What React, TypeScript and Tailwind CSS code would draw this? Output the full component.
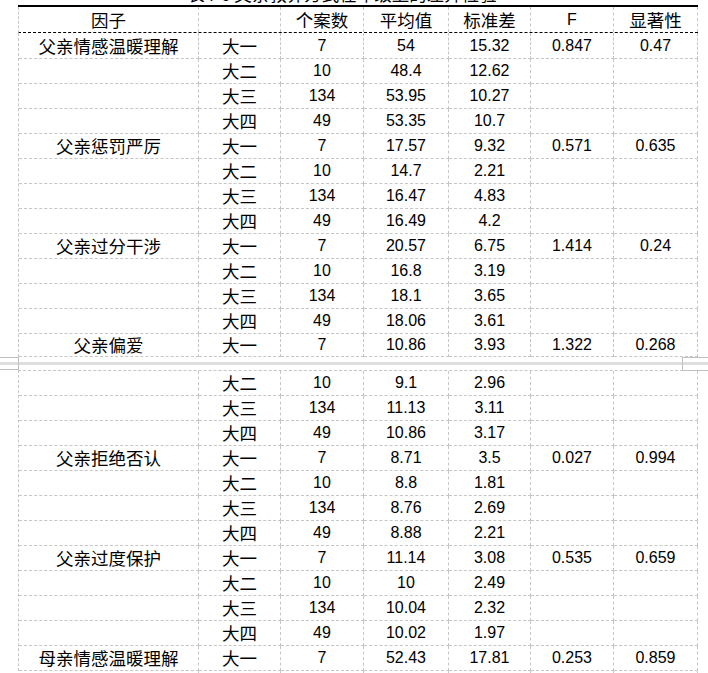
import React from "react";

type Row = { f?: string; g: string; n: string; m: string; sd: string; F?: string; p?: string; h?: number };

const page1: Row[] = [
  { f: "父亲情感温暖理解", g: "大一", n: "7", m: "54", sd: "15.32", F: "0.847", p: "0.47", h: 26 },
  { g: "大二", n: "10", m: "48.4", sd: "12.62" },
  { g: "大三", n: "134", m: "53.95", sd: "10.27" },
  { g: "大四", n: "49", m: "53.35", sd: "10.7" },
  { f: "父亲惩罚严厉", g: "大一", n: "7", m: "17.57", sd: "9.32", F: "0.571", p: "0.635" },
  { g: "大二", n: "10", m: "14.7", sd: "2.21" },
  { g: "大三", n: "134", m: "16.47", sd: "4.83" },
  { g: "大四", n: "49", m: "16.49", sd: "4.2" },
  { f: "父亲过分干涉", g: "大一", n: "7", m: "20.57", sd: "6.75", F: "1.414", p: "0.24" },
  { g: "大二", n: "10", m: "16.8", sd: "3.19" },
  { g: "大三", n: "134", m: "18.1", sd: "3.65" },
  { g: "大四", n: "49", m: "18.06", sd: "3.61" },
  { f: "父亲偏爱", g: "大一", n: "7", m: "10.86", sd: "3.93", F: "1.322", p: "0.268", h: 23 },
];

const page2: Row[] = [
  { g: "大二", n: "10", m: "9.1", sd: "2.96" },
  { g: "大三", n: "134", m: "11.13", sd: "3.11" },
  { g: "大四", n: "49", m: "10.86", sd: "3.17" },
  { f: "父亲拒绝否认", g: "大一", n: "7", m: "8.71", sd: "3.5", F: "0.027", p: "0.994" },
  { g: "大二", n: "10", m: "8.8", sd: "1.81" },
  { g: "大三", n: "134", m: "8.76", sd: "2.69" },
  { g: "大四", n: "49", m: "8.88", sd: "2.21" },
  { f: "父亲过度保护", g: "大一", n: "7", m: "11.14", sd: "3.08", F: "0.535", p: "0.659" },
  { g: "大二", n: "10", m: "10", sd: "2.49" },
  { g: "大三", n: "134", m: "10.04", sd: "2.32" },
  { g: "大四", n: "49", m: "10.02", sd: "1.97" },
  { f: "母亲情感温暖理解", g: "大一", n: "7", m: "52.43", sd: "17.81", F: "0.253", p: "0.859" },
  { g: "", n: "", m: "", sd: "" },
];

const GRID = "grid grid-cols-[180px_82px_83px_85px_82px_83px_84px]";
const CJK = "font-['Noto_Sans_CJK_SC',sans-serif] text-[17.5px]";
const NUM = "font-['Liberation_Sans',Arial,sans-serif] text-[16px]";

function Cell({ children, cjk, last }: { children?: React.ReactNode; cjk?: boolean; last?: boolean }) {
  return (
    <div
      className={`flex items-center justify-center border-r border-dashed border-[#c6c6c6] leading-none text-black ${
        last ? "" : "border-b"
      } ${cjk ? CJK : NUM}`}
    >
      {children}
    </div>
  );
}

function BodyRow({ r }: { r: Row }) {
  const h = r.h ?? 25;
  return (
    <div className={GRID} style={{ height: h }}>
      <Cell cjk>{r.f}</Cell>
      <Cell cjk>{r.g}</Cell>
      <Cell>{r.n}</Cell>
      <Cell>{r.m}</Cell>
      <Cell>{r.sd}</Cell>
      <Cell>{r.F}</Cell>
      <Cell>{r.p}</Cell>
    </div>
  );
}

export default function App() {
  return (
    <div className="relative w-[708px] h-[673px] overflow-hidden bg-white">
      {/* clipped title line */}
      <div className="h-[5px] overflow-hidden flex items-end justify-center pr-[24px]">
        <span className={`${CJK} leading-[22px] whitespace-nowrap text-black`}>
          表4-6 父亲教养方式在年级上的差异检验
        </span>
      </div>

      {/* page 1 table */}
      <div className="ml-[18px] w-[680px] border-t-2 border-black">
        <div className={`${GRID} h-[26px] border-b border-black border-l border-l-[#c6c6c6] border-dashed`}>
          <Cell cjk last>因子</Cell>
          <Cell cjk last></Cell>
          <Cell cjk last>个案数</Cell>
          <Cell cjk last>平均值</Cell>
          <Cell cjk last>标准差</Cell>
          <Cell last>F</Cell>
          <Cell cjk last>显著性</Cell>
        </div>
        <div className="border-l border-dashed border-[#c6c6c6]">
          {page1.map((r, i) => (
            <BodyRow key={i} r={r} />
          ))}
        </div>
      </div>

      {/* page break */}
      <div className="relative h-[13px] pt-[5px]">
        <div className="h-[3px] bg-[#dedede]" />
        <div className="absolute left-0 top-0 h-[14px] w-[19px] border-r border-[#c0c0c0]" />
        <div className="absolute left-0 top-0 w-[19px] border-t border-[#c0c0c0]" />
        <div className="absolute left-0 top-[12px] w-[19px] border-t border-[#c0c0c0]" />
        <div className="absolute left-[682px] top-0 h-[14px] w-[40px] border border-[#c0c0c0]" />
      </div>

      {/* page 2 table */}
      <div className="ml-[18px] w-[680px] border-t border-l border-dashed border-[#c6c6c6]">
        {page2.map((r, i) => (
          <BodyRow key={i} r={r} />
        ))}
      </div>
    </div>
  );
}
